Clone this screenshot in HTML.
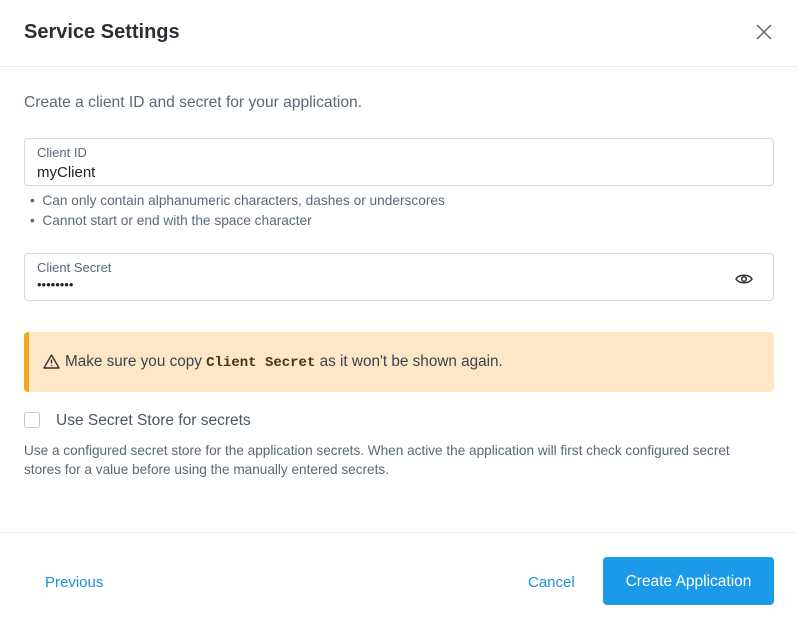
<!DOCTYPE html>
<html><head><style>
*{box-sizing:border-box;margin:0;padding:0}
body{width:797px;height:629px;background:#fff;font-family:"Liberation Sans",sans-serif;position:relative;overflow:hidden;color:#303a46}
.a{position:absolute}
.title{left:24px;top:21px;font-size:20px;font-weight:bold;color:#2a2f36}
.hr{left:0;width:797px;height:1px;background:#e6ebf0}
.intro{left:24px;top:94px;font-size:15.6px;color:#5a6777}
.inp{left:24px;width:750px;height:48px;border:1px solid #cfd6de;border-radius:4px}
.lbl{position:absolute;left:12px;top:6px;font-size:13px;color:#5a6777}
.val{position:absolute;left:12px;top:24px;font-size:15px;color:#222}
.hint{left:30px;font-size:13.7px;color:#5a6777}
.warn{left:24px;top:332px;width:750px;height:60px;background:#fde7c7;border-left:5px solid #f5a623;border-radius:4px}
.btn{font-size:15px;color:#1a8fd8}
</style></head><body>
<div class="a title">Service Settings</div>
<svg class="a" style="left:755px;top:23px" width="18" height="18" viewBox="0 0 18 18"><path d="M2 2L16 16M16 2L2 16" stroke="#6b7480" stroke-width="1.6"/></svg>
<div class="a hr" style="top:66px"></div>
<div class="a intro">Create a client ID and secret for your application.</div>
<div class="a inp" style="top:138px"><div class="lbl">Client ID</div><div class="val" style="top:25px">myClient</div></div>
<div class="a hint" style="top:193px">•&nbsp; Can only contain alphanumeric characters, dashes or underscores</div>
<div class="a hint" style="top:213px">•&nbsp; Cannot start or end with the space character</div>
<div class="a inp" style="top:253px"><div class="lbl">Client Secret</div><div class="val" style="top:23px;font-size:13px;letter-spacing:0px">••••••••</div>
<svg style="position:absolute;right:20px;top:19px" width="18" height="12" viewBox="0 0 18 12"><path d="M1 6C4 1 14 1 17 6C14 11 4 11 1 6Z" fill="none" stroke="#333" stroke-width="1.5"/><circle cx="9" cy="6" r="2.3" fill="none" stroke="#333" stroke-width="1.5"/></svg></div>
<div class="a warn"><svg style="position:absolute;left:14px;top:22px" width="17" height="15" viewBox="0 0 17 15"><path d="M8.5 1L16 14H1Z" fill="none" stroke="#333" stroke-width="1.4" stroke-linejoin="round"/><path d="M8.5 5.5V9.5M8.5 11V12" stroke="#333" stroke-width="1.4"/></svg>
<div style="position:absolute;left:36px;top:21px;font-size:15.3px;color:#3a4350">Make sure you copy <b style="font-family:'Liberation Mono',monospace;font-size:14px;color:#4a3410">Client Secret</b> as it won't be shown again.</div></div>
<div class="a" style="left:24px;top:412px;width:16px;height:16px;border:1px solid #bcc5cf;border-radius:3px"></div>
<div class="a" style="left:56px;top:412px;font-size:15.5px;color:#4a5563">Use Secret Store for secrets</div>
<div class="a" style="left:24px;top:441px;width:745px;font-size:13.6px;line-height:19px;color:#5a6777">Use a configured secret store for the application secrets. When active the application will first check configured secret stores for a value before using the manually entered secrets.</div>
<div class="a hr" style="top:532px"></div>
<div class="a btn" style="left:45px;top:574px">Previous</div>
<div class="a btn" style="left:528px;top:574px">Cancel</div>
<div class="a" style="left:603px;top:557px;width:171px;height:48px;background:#1a9ae8;border-radius:4px;color:#fff;font-size:15.5px;text-align:center;line-height:50px">Create Application</div>
</body></html>
